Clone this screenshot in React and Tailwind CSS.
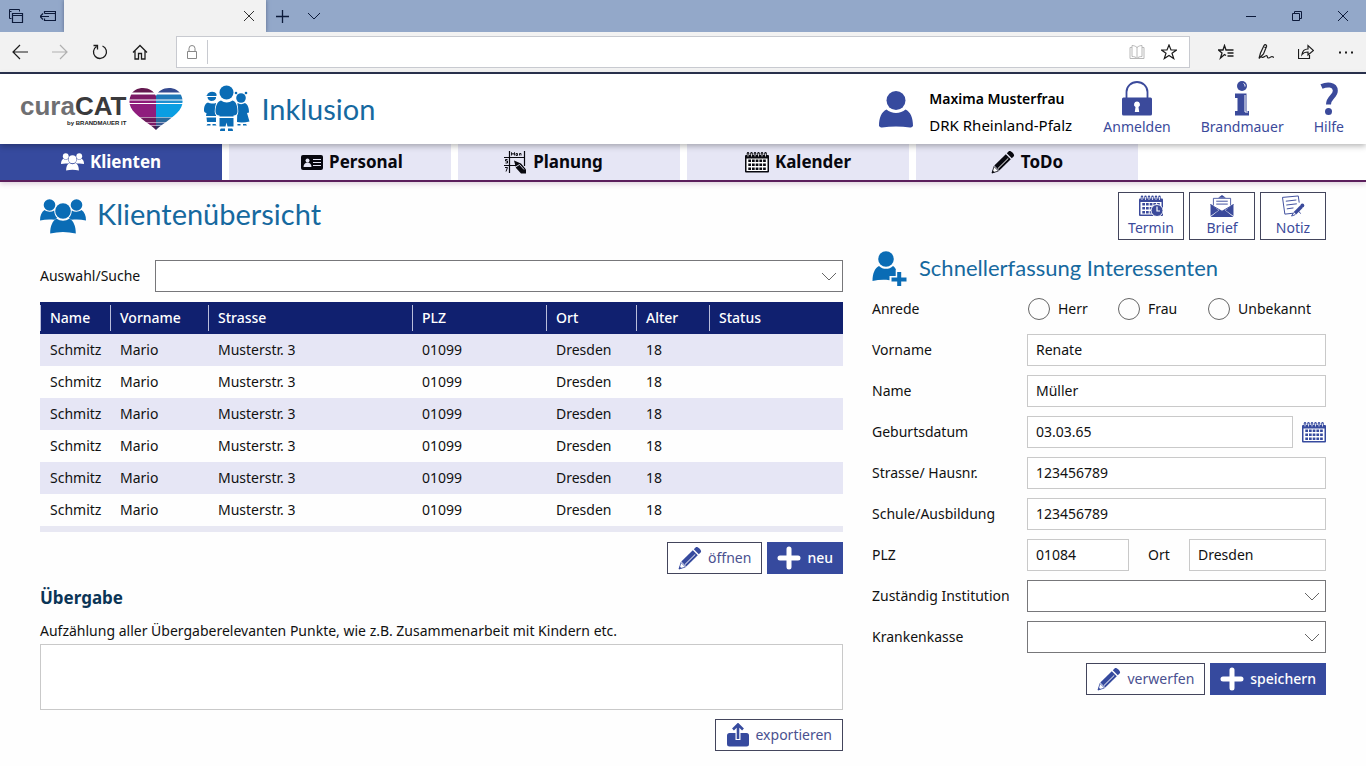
import React from 'react';

const clients = Array.from({ length: 6 }, (_, i) => ({
    id: i + 1,
    name: 'Schmitz',
    vorname: 'Mario',
    strasse: 'Musterstr. 3',
    plz: '01099',
    ort: 'Dresden',
    alter: '18',
    status: '',
}));

const columns = [
    { key: 'name', label: 'Name', width: 'w-[70px]' },
    { key: 'vorname', label: 'Vorname', width: 'w-[98px]' },
    { key: 'strasse', label: 'Strasse', width: 'w-[204px]' },
    { key: 'plz', label: 'PLZ', width: 'w-[134px]' },
    { key: 'ort', label: 'Ort', width: 'w-[90px]' },
    { key: 'alter', label: 'Alter', width: 'w-[73px]' },
    { key: 'status', label: 'Status', width: '' },
];

/* ---------- Icons ---------- */

function LineIcon({ className = 'w-4 h-4', children }) {
    return (
        <svg viewBox="0 0 16 16" className={className} fill="none" stroke="currentColor" strokeWidth="1" aria-hidden="true">
            {children}
        </svg>
    );
}

function UsersIcon({ className }) {
    return (
        <svg viewBox="0 0 46 35" className={className} fill="currentColor" aria-hidden="true">
            <circle cx="9.5" cy="6" r="5.8" />
            <circle cx="36.5" cy="6" r="5.8" />
            <path d="M4.500 11C1.500 13 0 16.500 0 21.500c5-1.300 10-1.300 14.500-.800 1-.800 1.800-1.200 2.700-1.700-1.900-2-2.900-4.300-3-7.500-3 1.800-7 1.500-9.700-.500z" />
            <path d="M41.500 11c3 2 4.500 5.500 4.500 10.500-5-1.300-10-1.300-14.500-.800-1-.800-1.800-1.200-2.700-1.700 1.900-2 2.900-4.300 3-7.500 3 1.800 7 1.500 9.700-.500z" />
            <circle cx="23" cy="12" r="7.800" />
            <path d="M16.500 19.500c-4 2.500-6.300 7.500-6.300 15 8.500-2 17-2 25.600 0 0-7.500-2.300-12.500-6.300-15-4 3-9 3-13 0z" />
        </svg>
    );
}

function ChildrenIcon({ className }) {
    return (
        <svg viewBox="0 0 46 48" className={className} fill="currentColor" aria-hidden="true">
            {/* boy with cap */}
            <path d="M3 10.500c.500-4 7.500-5 9.500-1.500v2H1.500z" />
            <path d="M3.500 12h8.500c.500 5-8.500 5.500-8.500 0z" />
            <path d="M4 17.500c-3 1-4 4-4 8 0 1.500 1 2.500 2.500 2.500L2 31h10V18c-2 .8-6 .8-8-.5zM2.500 32.500H12V37H3z" />
            <path d="M3.500 39h3v1.500h-4zM8.500 39h3l1 1.500h-4z" />
            {/* girl with pigtails */}
            <circle cx="37" cy="13" r="4.800" />
            <circle cx="32" cy="8" r="1.300" />
            <circle cx="42" cy="8" r="1.300" />
            <path d="M33.500 18c2 1.500 5 1.500 7.500 0 3 1.500 4 5 4 9.500l-2 .5 2.500 8.500c-4 1-9 1.300-12.500.5z" />
            <path d="M33.500 39h3v1.500h-3zM39 39h3l1 1.500h-4z" />
            {/* front child, white edge keeps it apart from the other two */}
            <g stroke="#fff" strokeWidth="1.600" paintOrder="stroke">
                <circle cx="22.500" cy="7.500" r="7" />
                <path d="M17 15.500c3.500 2.500 8 2.500 11.500 0 3.500 1 5 5 5 11 0 2.500-1.500 4-4 4v1H15.500v-1c-2.500 0-4-1.500-4-4 0-6 2-10 5.500-11z" />
                <path d="M15.500 33h14v8.500h-6l-1-4-1 4h-6z" />
            </g>
            <path d="M17 43.500h4V46h-5c0-1.500.5-2.500 1-2.500zM24 43.500h4c.5 0 1 1 1 2.500h-5z" />
        </svg>
    );
}

function HeartLogo({ className }) {
    const stripes = [
        { y: 0, h: 4.5, left: '#64194f', right: '#354a8f' },
        { y: 6.5, h: 5, left: '#7c1a66', right: '#1f78b8' },
        { y: 12.5, h: 2.5, left: '#8d1a78', right: '#1f8fd0' },
        { y: 16, h: 13, left: '#8f1d7d', right: '#0a9ee2' },
        { y: 29.5, h: 4.5, left: '#6d1a5c', right: '#2b6a9c' },
        { y: 34.5, h: 3, left: '#7c1a66', right: '#3c5b95' },
        { y: 38, h: 4, left: '#4d1c50', right: '#33305f' },
    ];
    return (
        <svg viewBox="0 0 54 42" className={className} aria-hidden="true">
            <defs>
                <clipPath id="heart">
                    <path d="M27 42C22 37 12 31 6 25 1 20-.5 15 1 9.500 3 2 9 0 14 0c6 0 11 3 13 8C29 3 34 0 40 0c5 0 11 2 13 9.500 1.500 5.500 0 10.500-5 15.500-6 6-16 12-21 17z" />
                </clipPath>
            </defs>
            <g clipPath="url(#heart)">
                {stripes.map(s => (
                    <React.Fragment key={s.y}>
                        <rect x="0" y={s.y} width="27" height={s.h} fill={s.left} />
                        <rect x="27" y={s.y} width="27" height={s.h} fill={s.right} />
                    </React.Fragment>
                ))}
            </g>
        </svg>
    );
}

function UserIcon({ className }) {
    return (
        <svg viewBox="0 0 34 37" className={className} fill="currentColor" aria-hidden="true">
            <circle cx="17" cy="9.500" r="9.500" />
            <path d="M7.500 18.500c5 4.500 14 4.500 19 0 5 2.500 7.500 8 7.500 16.500-1 1.500-2 1.500-3 1.500-9-1.500-19-1.500-28 0-1 0-2 0-3-1.500 0-8.500 2.500-14 7.500-16.500z" />
        </svg>
    );
}

function UserPlusIcon({ className }) {
    return (
        <svg viewBox="0 0 34 35" className={className} fill="currentColor" aria-hidden="true">
            <circle cx="13.500" cy="8" r="7.800" />
            <path d="M6.500 15c4 3.800 10 3.800 14 0 1.500 1 2.500 2.300 3 4h-.300v6H17v4.300C11.500 28.500 6 28.800 0 30 .200 22.500 2 17.500 6.500 15z" />
            <path d="M24.700 21h4v5.500H34v4h-5.300V35h-4v-4.500H19v-4h5.700z" />
        </svg>
    );
}

function LockIcon({ className }) {
    return (
        <svg viewBox="0 0 30 35" className={className} aria-hidden="true">
            <path d="M4.500 18V11a10.500 10 0 0 1 21 0v7" fill="none" stroke="currentColor" strokeWidth="1.800" />
            <rect x="0" y="16.500" width="30" height="18" rx="1.500" fill="currentColor" />
            <path d="M15 20.500a3 3 0 0 1 1.500 5.600l.700 5h-4.400l.700-5A3 3 0 0 1 15 20.500z" fill="#fff" />
        </svg>
    );
}

function InfoIcon({ className }) {
    return (
        <svg viewBox="0 0 16 35" className={className} fill="currentColor" aria-hidden="true">
            <circle cx="8" cy="5" r="5" />
            <path d="M9.500 2.500a2.500 2.500 0 0 1 1.500 3" fill="none" stroke="#fff" />
            <path d="M1 12.500h11.500V30H15v4.500H1V30h2.500V17H1z" />
            <path d="M11 14v17h3" fill="none" stroke="#fff" />
        </svg>
    );
}

function HelpIcon({ className }) {
    return (
        <svg viewBox="0 0 18 34" className={className} aria-hidden="true">
            <path d="M1.500 4.500C7 2 15 2 15.300 8.500 15.500 14.500 8.500 15 8.500 22.500" fill="none" stroke="currentColor" strokeWidth="5" />
            <circle cx="8.500" cy="29.500" r="3.500" fill="currentColor" />
        </svg>
    );
}

function CardIcon({ className }) {
    return (
        <svg viewBox="0 0 22 15" className={className} aria-hidden="true">
            <rect width="22" height="15" rx="2" fill="currentColor" />
            <circle cx="6.500" cy="5.500" r="2" fill="#e6e6f5" />
            <path d="M2.500 12c0-3 2-4.500 4-4.500s4 1.500 4 4.500z" fill="#e6e6f5" />
            <path d="M12 4.500h8M12 7.500h8M12 10.500h8" stroke="#e6e6f5" strokeWidth="1.200" />
        </svg>
    );
}

function PlanIcon({ className }) {
    return (
        <svg viewBox="0 0 24 24" className={className} aria-hidden="true">
            <path d="M6.500 1v22M21.500 1v15M1 7.500h21M1 15.500h13" fill="none" stroke="currentColor" strokeWidth="1.200" />
            <path d="M8.500 5.500v-3l1.500 2 1.500-2v3M13 3.500h1.500v2H13zM16.500 5.500v-2H18v2" fill="none" stroke="currentColor" strokeWidth=".9" />
            <path d="M4.500 9.500H2.500v1.500h2v2h-2M2 17.500h2.500L3 21.500" fill="none" stroke="currentColor" strokeWidth="1" />
            <path d="M11 10.500l7 3 5 6v4h-5l-5-5.500z" fill="currentColor" />
            <path d="M12.500 17l4-2.500 4.500 5" fill="none" stroke="#e6e6f5" strokeWidth=".9" />
        </svg>
    );
}

function CalendarIcon({ className, clock = false }) {
    const rings = [3, 6.5, 10, 13.5, 17, 20.5];
    return (
        <svg viewBox="0 0 24 21" className={className} aria-hidden="true">
            <rect x="0" y="3" width="24" height="17.500" rx="1" fill="currentColor" />
            <rect x="1.500" y="6.500" width="21" height="12.500" fill="#fff" />
            {rings.map(x => (
                <g key={x}>
                    <rect x={x - 1.2} y="0" width="2.400" height="5" rx="1.200" fill="currentColor" />
                    <path d={`M${x} 1.500v3`} stroke="#fff" strokeWidth=".8" />
                </g>
            ))}
            {[8.5, 12.5, 16.5].map(y => (
                <path key={y} d={`M3.300 ${y + 0.2}h18`} stroke="currentColor" strokeWidth="2.600" strokeDasharray="2.700 1" />
            ))}
            {clock && (
                <>
                    <circle cx="18" cy="15" r="6" fill="currentColor" stroke="#fff" />
                    <path d="M18 11v4.500h3" fill="none" stroke="#fff" strokeWidth="1.200" />
                </>
            )}
        </svg>
    );
}

function PencilIcon({ className }) {
    return (
        <svg viewBox="0 0 24 24" className={className} aria-hidden="true">
            <path d="M17.800 1.300c1.500-1.500 6.500 3.200 5 5L20.800 8.300 15.800 3.300z" fill="currentColor" />
            <path d="M14.800 4.300l5 5L8.300 20.600 3.300 15.600z" fill="currentColor" />
            <path d="M17.300 8.300L7 18.500" stroke="#fff" strokeWidth="1" />
            <path d="M3 16.500l-2 6.500 6.500-2z" fill="#fff" stroke="currentColor" strokeWidth=".8" />
            <path d="M1.500 20.300L.800 23.200l3-.700z" fill="currentColor" />
        </svg>
    );
}

function LetterIcon({ className }) {
    return (
        <svg viewBox="0 0 24 23" className={className} aria-hidden="true">
            <path d="M8 3l4-3 4 3z" fill="currentColor" />
            <path d="M3 11V3.500h18V11" fill="#fff" stroke="currentColor" strokeWidth=".9" />
            <path d="M6 6.500h12M6 9.500h12" stroke="currentColor" strokeWidth="1" />
            <path d="M0 9.500l8.500 6.500L0 22zM24 9.500l-8.500 6.500L24 22z" fill="currentColor" />
            <path d="M0 23l9.500-7.500 2.500 1.500 2.500-1.500L24 23z" fill="currentColor" />
            <path d="M0 10l12 7 12-7" fill="none" stroke="currentColor" />
        </svg>
    );
}

function NoteIcon({ className }) {
    return (
        <svg viewBox="0 0 24 23" className={className} fill="none" stroke="currentColor" aria-hidden="true">
            <path d="M18.500 8L17.500 1 1 2.500 3.500 20l9-1" />
            <path d="M4.500 6.500l11-1.300M5 10.500l11-1.300M5.500 14.500l7-1" />
            <path d="M21 12L14 19" strokeWidth="3.600" />
            <circle cx="21.800" cy="11" r="2" fill="currentColor" stroke="none" />
            <path d="M12.500 18.500l-2 3.500 4-1.500M18 17l2 2.500" />
        </svg>
    );
}

function PlusIcon({ className }) {
    return (
        <svg viewBox="0 0 24 24" className={className} aria-hidden="true">
            <path d="M12 3v18M3 12h18" stroke="currentColor" strokeWidth="5" strokeLinecap="round" />
        </svg>
    );
}

function ExportIcon({ className }) {
    return (
        <svg viewBox="0 0 24 24" className={className} aria-hidden="true">
            <rect x="1" y="10" width="22" height="13.500" rx="2.500" fill="currentColor" />
            <path d="M12 17V5" stroke="#fff" strokeWidth="5" />
            <path d="M12 16V3M7 6.500l5-5 5 5" fill="none" stroke="currentColor" strokeWidth="2.600" />
        </svg>
    );
}

/* ---------- Browser frame ---------- */

function ChromeButton({ label, width = 'w-10', children, className = '' }) {
    return (
        <button type="button" aria-label={label} className={`${width} h-full flex items-center justify-center ${className}`}>
            {children}
        </button>
    );
}

function BrowserBar() {
    return (
        <div className="text-[#1c1c1c]">
            <div className="h-8 flex items-stretch bg-[#93a8c9] text-[#0c1a3a]">
                <ChromeButton label="Registerkarten" width="w-8">
                    <LineIcon>
                        <path d="M3.500 10.500h-2v-9h10v2M1.500 3.500h2" />
                        <path d="M4.500 5.500h10v9h-10zM4.500 7.500h10" strokeWidth="1.200" />
                    </LineIcon>
                </ChromeButton>
                <ChromeButton label="Registerkarten ablegen" width="w-8">
                    <LineIcon>
                        <path d="M4.500 5.500v-2h11v9h-11v-2M4.500 5.500h11M0 8.500h9M3 5.500l-3 3 3 3" strokeWidth="1.200" />
                    </LineIcon>
                </ChromeButton>
                <div className="w-[202px] bg-[#f2f2f2] flex justify-end text-[#333] shadow-[0_0_4px_#5b6b8a]">
                    <ChromeButton label="Tab schließen" width="w-[34px]">
                        <LineIcon><path d="M3 3l10 10M13 3L3 13" /></LineIcon>
                    </ChromeButton>
                </div>
                <ChromeButton label="Neuer Tab" width="w-8">
                    <LineIcon><path d="M8.500 2v13M2 8.500h13" strokeWidth="1.300" /></LineIcon>
                </ChromeButton>
                <ChromeButton label="Tabvorschau" width="w-8">
                    <LineIcon><path d="M2 5l6 6 6-6" /></LineIcon>
                </ChromeButton>
                <div className="ml-auto flex">
                    <ChromeButton label="Minimieren" width="w-[46px]">
                        <LineIcon><path d="M3 8.500h10" /></LineIcon>
                    </ChromeButton>
                    <ChromeButton label="Verkleinern" width="w-[46px]">
                        <LineIcon><path d="M3.500 5.500h7v7h-7zM5.500 5.500v-2h7v7h-2" /></LineIcon>
                    </ChromeButton>
                    <ChromeButton label="Schließen" width="w-[46px]">
                        <LineIcon><path d="M3 3l10 10M13 3L3 13" /></LineIcon>
                    </ChromeButton>
                </div>
            </div>

            <div className="relative h-[42px] flex items-center bg-[#f2f2f2] border-b-2 border-[#2b3350]">
                <ChromeButton label="Zurück">
                    <LineIcon><path d="M1 8h15M8 1L1 8l7 7" strokeWidth="1.200" /></LineIcon>
                </ChromeButton>
                <ChromeButton label="Vorwärts" className="text-[#b0b0b0]">
                    <LineIcon><path d="M0 8h15M8 1l7 7-7 7" strokeWidth="1.200" /></LineIcon>
                </ChromeButton>
                <ChromeButton label="Aktualisieren">
                    <LineIcon><path d="M4.500 2.500a6.500 6.500 0 1 0 6-.500M1.500 1.500h4v4" strokeWidth="1.300" /></LineIcon>
                </ChromeButton>
                <ChromeButton label="Startseite">
                    <LineIcon><path d="M1 8.500L8 1.500l7 7M3 7v8h3.500V9.500h3V15H13V7" strokeWidth="1.300" /></LineIcon>
                </ChromeButton>
                <div className="flex-1 h-8 mx-4 flex items-center bg-white border border-[#c8cad0]">
                    <LineIcon className="w-4 h-4 mx-[7px] text-[#888]">
                        <path d="M3.500 7.500h9v7h-9zM5 7.500V4.500a3 3 0 0 1 6 0v3" />
                    </LineIcon>
                    <input type="text" aria-label="Adresse" className="flex-1 min-w-0 h-6 px-2 border-l border-[#c8cad0] outline-none text-sm" />
                    <ChromeButton label="Leseansicht" width="w-6" className="text-[#b8b8b8]">
                        <LineIcon><path d="M8 3.500C6.500 2 4.500 1.500 3 1.500v11c2 0 4 .5 5 2 1-1.500 3-2 5-2v-11c-1.500 0-3.500.5-5 2zM8 3v11.500M3 3.500H1v11h14v-11h-2" /></LineIcon>
                    </ChromeButton>
                    <ChromeButton label="Favorit">
                        <LineIcon><path d="M8 1l2 5h5.500L11 9.300l1.700 5.200L8 11.400l-4.700 3.100L5 9.300.500 6H6z" strokeWidth="1.200" /></LineIcon>
                    </ChromeButton>
                </div>
                <ChromeButton label="Favoriten">
                    <LineIcon><path d="M8 11.500l-1.500-1L2.500 14l1.500-5L.500 6H5l1.500-4.500L8 6h7.500M9.500 9h6M9.500 12h6" strokeWidth="1.300" /></LineIcon>
                </ChromeButton>
                <ChromeButton label="Notizen">
                    <LineIcon><path d="M1 14.500L2.500 9 6 1.500c1-1.500 3-.5 2.500 1L5.500 10 1 14.500M3.500 13c2 1.500 3-1 5-1.500 1.500 0 0 2.500 2 2.500s2-1.500 3.500-1.500l2 1M6.500 3l1.500 1" strokeWidth="1.200" /></LineIcon>
                </ChromeButton>
                <ChromeButton label="Teilen">
                    <LineIcon><path d="M.500 5v9.500h11V11M4 10.500C4.500 6.500 7 5 10 5V1.500l5.500 5-5.500 4.500V8C7.500 8 5.500 8.500 4 10.500z" strokeWidth="1.200" /></LineIcon>
                </ChromeButton>
                <ChromeButton label="Mehr">
                    <LineIcon><path d="M1 8.500h2M7 8.500h2M13 8.500h2" strokeWidth="1.800" /></LineIcon>
                </ChromeButton>
            </div>
        </div>
    );
}

/* ---------- App header ---------- */

function HeaderLink({ icon, label }) {
    return (
        <a href="#" className="flex flex-col items-center text-[#3b4a9b]">
            <span className="h-[35px] flex items-end">{icon}</span>
            <span className="leading-[22px]">{label}</span>
        </a>
    );
}

function Header() {
    return (
        <header className="relative z-10 h-[70px] flex items-center bg-white pl-5 pr-[22px] shadow-[0_2px_6px_rgba(0,0,0,0.3)]">
            <div className="flex items-center">
                <div className="font-['Liberation_Sans',Arial,sans-serif] font-bold text-right">
                    <div className="text-[26px] leading-7 text-[#3a3a3c]"><span className="text-[#6f6f72]">cura</span>CAT</div>
                    <div className="text-[6px] leading-[6px] text-[#222]">by BRANDMAUER IT</div>
                </div>
                <HeartLogo className="ml-[3px] w-[54px] h-[42px]" />
            </div>
            <ChildrenIcon className="w-[46px] h-12 ml-[21px] text-[#0a6cb5]" />
            <h1 className="ml-[11px] font-['Lato',sans-serif] text-[29px] leading-10 text-[#16699f]">Inklusion</h1>

            <UserIcon className="w-[34px] h-[37px] ml-auto text-[#364a9e]" />
            <div className="ml-4 pt-1.5 w-[152px] leading-[26px] text-black">
                <div className="font-semibold">Maxima Musterfrau</div>
                <div className="whitespace-nowrap text-[15px]">DRK Rheinland-Pfalz</div>
            </div>
            <nav className="ml-[22px] flex gap-[30px]">
                <HeaderLink label="Anmelden" icon={<LockIcon className="w-[30px] h-[35px]" />} />
                <HeaderLink label="Brandmauer" icon={<InfoIcon className="w-4 h-[35px]" />} />
                <HeaderLink label="Hilfe" icon={<HelpIcon className="w-[18px] h-[34px]" />} />
            </nav>
        </header>
    );
}

function NavTab({ icon, label, active = false, className = '' }) {
    return (
        <a
            href="#"
            aria-current={active ? 'page' : undefined}
            className={`h-9 flex items-center justify-center gap-1.5 text-[17px] font-bold ${active ? 'bg-[#364a9e] text-white' : 'bg-[#e6e6f5] text-[#08080f]'} ${className}`}
        >
            {icon}
            {label}
        </a>
    );
}

function MainNav() {
    return (
        <nav className="grid grid-cols-5 gap-[7px] pr-[228px] bg-white border-b-2 border-[#5b1f5c] shadow-[0_2px_5px_rgba(91,31,92,0.2)]">
            <NavTab active label="Klienten" icon={<UsersIcon className="w-[23px] h-[18px]" />} />
            <NavTab label="Personal" className="pl-6" icon={<CardIcon className="w-[22px] h-[15px]" />} />
            <NavTab label="Planung" className="pr-8" icon={<PlanIcon className="w-6 h-6" />} />
            <NavTab label="Kalender" icon={<CalendarIcon className="w-6 h-[21px]" />} />
            <NavTab label="ToDo" icon={<PencilIcon className="w-6 h-6" />} />
        </nav>
    );
}

/* ---------- Controls ---------- */

function SelectBox({ id }) {
    return (
        <div className="relative flex-1 min-w-0">
            <select id={id} className="block w-full h-8 appearance-none bg-white border border-[#77777a] pl-2 pr-8">
                <option value=""></option>
            </select>
            <svg viewBox="0 0 16 10" className="absolute right-[6px] top-3 w-4 h-[10px] pointer-events-none" fill="none" stroke="#666" aria-hidden="true">
                <path d="M1 1l7 7 7-7" />
            </svg>
        </div>
    );
}

function OutlineButton({ icon, children }) {
    return (
        <button type="button" className="h-8 px-[10px] flex items-center gap-1.5 bg-white border border-[#43455c] text-[#4a5190]">
            <span className="text-[#364a9e]">{icon}</span>
            {children}
        </button>
    );
}

function PrimaryButton({ children }) {
    return (
        <button type="button" className="h-8 px-[10px] flex items-center gap-1.5 bg-[#364a9e] text-white font-medium">
            <PlusIcon className="w-6 h-6" />
            {children}
        </button>
    );
}

function TileButton({ icon, label }) {
    return (
        <button type="button" className="w-[66px] h-12 pt-0.5 flex flex-col items-center justify-center bg-white border border-[#43455c] text-[#3b4a9b]">
            {icon}
            <span className="leading-[22px]">{label}</span>
        </button>
    );
}

function FormRow({ id, label, children }) {
    return (
        <div className="grid grid-cols-[155px_1fr] items-center h-8">
            <label htmlFor={id}>{label}</label>
            <div className="flex items-center min-w-0">{children}</div>
        </div>
    );
}

function TextInput({ id, value, className = 'flex-1' }) {
    return (
        <input
            id={id}
            type="text"
            defaultValue={value}
            className={`h-8 min-w-0 px-2 pb-0.5 bg-white border border-[#c9c9c9] ${className}`}
        />
    );
}

/* ---------- Sections ---------- */

function ClientTable() {
    return (
        <table className="w-full mt-[10px] table-fixed border-collapse text-left">
            <thead>
                <tr className="h-8 bg-[#10206f] text-white">
                    {columns.map(col => (
                        <th key={col.key} scope="col" className={`p-0 font-medium ${col.width}`}>
                            <div className="h-[26px] leading-[26px] border-l border-[#b9bddb] pl-[9px]">{col.label}</div>
                        </th>
                    ))}
                </tr>
            </thead>
            <tbody>
                {clients.map(client => (
                    <tr key={client.id} className="h-8 odd:bg-[#e6e6f5]">
                        {columns.map(col => (
                            <td key={col.key} className="p-0 pl-[10px]">{client[col.key]}</td>
                        ))}
                    </tr>
                ))}
            </tbody>
            <tfoot>
                <tr className="h-[6px] bg-[#e8e8f3]"><td colSpan={7} className="p-0"></td></tr>
            </tfoot>
        </table>
    );
}

function ClientOverview() {
    return (
        <section className="flex-1 min-w-0">
            <div className="h-12 flex items-center gap-[11px]">
                <UsersIcon className="w-[46px] h-[35px] text-[#0a6cb5]" />
                <h2 className="pb-1 font-['Lato',sans-serif] text-[29px] leading-10 text-[#16699f]">Klientenübersicht</h2>
            </div>

            <div className="mt-5 flex items-center">
                <label htmlFor="search" className="w-[115px]">Auswahl/Suche</label>
                <SelectBox id="search" />
            </div>

            <ClientTable />

            <div className="mt-[10px] flex justify-end gap-[5px]">
                <OutlineButton icon={<PencilIcon className="w-6 h-6" />}>öffnen</OutlineButton>
                <PrimaryButton>neu</PrimaryButton>
            </div>

            <h3 className="mt-3 text-[17px] leading-6 font-bold text-[#0b3556]">Übergabe</h3>
            <label htmlFor="handover" className="mt-[9px] block leading-6">
                Aufzählung aller Übergaberelevanten Punkte, wie z.B. Zusammenarbeit mit Kindern etc.
            </label>
            <textarea id="handover" className="mt-px block w-full h-[66px] p-2 resize-none bg-white border border-[#c9c9c9]" />

            <div className="mt-[9px] flex justify-end">
                <OutlineButton icon={<ExportIcon className="w-6 h-6" />}>exportieren</OutlineButton>
            </div>
        </section>
    );
}

function QuickEntry() {
    return (
        <section className="w-[454px]">
            <div className="flex justify-end gap-[5px]">
                <TileButton label="Termin" icon={<CalendarIcon clock className="w-6 h-[22px]" />} />
                <TileButton label="Brief" icon={<LetterIcon className="w-6 h-[22px]" />} />
                <TileButton label="Notiz" icon={<NoteIcon className="w-6 h-[22px]" />} />
            </div>

            <div className="mt-[10px] h-9 flex items-center gap-3">
                <UserPlusIcon className="w-[35px] h-[35px] text-[#0a6cb5]" />
                <h2 className="font-['Lato',sans-serif] text-[22px] leading-9 text-[#16699f]">Schnellerfassung Interessenten</h2>
            </div>

            <form className="mt-[7px]">
                <div className="flex flex-col gap-[9px]">
                    <div role="radiogroup" aria-labelledby="anrede" className="grid grid-cols-[155px_1fr] items-center h-8">
                        <span id="anrede">Anrede</span>
                        <div className="grid grid-cols-[90px_90px_1fr] pl-px">
                            {['Herr', 'Frau', 'Unbekannt'].map(option => (
                                <label key={option} className="flex items-center gap-2">
                                    <input type="radio" name="anrede" value={option} className="appearance-none w-[22px] h-[22px] rounded-full border border-[#666] checked:border-[6px]" />
                                    {option}
                                </label>
                            ))}
                        </div>
                    </div>
                    <FormRow id="vorname" label="Vorname"><TextInput id="vorname" value="Renate" /></FormRow>
                    <FormRow id="name" label="Name"><TextInput id="name" value="Müller" /></FormRow>
                    <FormRow id="birthday" label="Geburtsdatum">
                        <TextInput id="birthday" value="03.03.65" />
                        <button type="button" aria-label="Kalender öffnen" className="ml-[9px] text-[#364a9e]">
                            <CalendarIcon className="w-6 h-[21px]" />
                        </button>
                    </FormRow>
                    <FormRow id="street" label="Strasse/ Hausnr."><TextInput id="street" value="123456789" /></FormRow>
                    <FormRow id="school" label="Schule/Ausbildung"><TextInput id="school" value="123456789" /></FormRow>
                    <FormRow id="zip" label="PLZ">
                        <TextInput id="zip" value="01084" className="w-[102px]" />
                        <label htmlFor="city" className="w-[60px] text-center">Ort</label>
                        <TextInput id="city" value="Dresden" />
                    </FormRow>
                    <FormRow id="institution" label="Zuständig Institution"><SelectBox id="institution" /></FormRow>
                    <FormRow id="insurance" label="Krankenkasse"><SelectBox id="insurance" /></FormRow>
                </div>
                <div className="mt-[10px] flex justify-end gap-[5px]">
                    <OutlineButton icon={<PencilIcon className="w-6 h-6" />}>verwerfen</OutlineButton>
                    <PrimaryButton>speichern</PrimaryButton>
                </div>
            </form>
        </section>
    );
}

export default function App() {
    return (
        <div className="min-h-screen bg-[#fefefe] font-['Noto_Sans',sans-serif] text-sm text-[#111]">
            <BrowserBar />
            <Header />
            <MainNav />
            <main className="flex items-start gap-[29px] px-10 pt-[10px]">
                <ClientOverview />
                <QuickEntry />
            </main>
        </div>
    );
}
